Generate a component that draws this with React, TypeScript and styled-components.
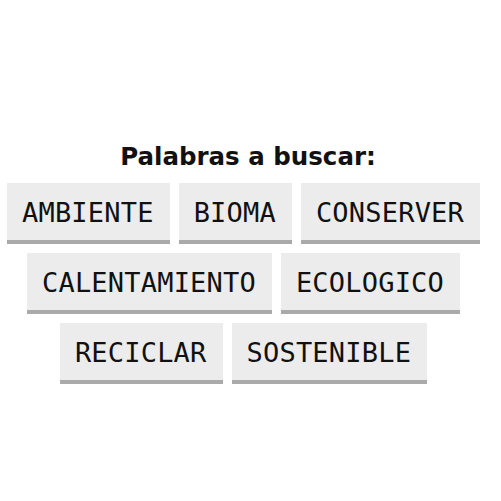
import React from "react";
import styled, { createGlobalStyle } from "styled-components";

const Global = createGlobalStyle`
  html, body { margin: 0; padding: 0; background: #fff; }
`;

const Page = styled.div`
  width: 488px;
  margin-left: 4px;
  padding-top: 142px;
  display: flex;
  flex-direction: column;
  align-items: center;
`;

const Title = styled.div`
  font-family: "DejaVu Sans", Verdana, sans-serif;
  font-weight: bold;
  font-size: 24.5px;
  line-height: 30px;
  color: #111;
  margin-bottom: 11px;
`;

const WordList = styled.div`
  display: flex;
  flex-wrap: wrap;
  justify-content: center;
  width: 100%;
`;

const Word = styled.div`
  font-family: "DejaVu Sans Mono", monospace;
  font-size: 27px;
  letter-spacing: 0.2px;
  line-height: 31px;
  color: #111;
  background: #ececec;
  padding: 14px 16px 12px 15px;
  border-bottom: 4px solid #aaaaaa;
  margin: 0 9px 9px 0;
`;

const words = [
  "AMBIENTE",
  "BIOMA",
  "CONSERVER",
  "CALENTAMIENTO",
  "ECOLOGICO",
  "RECICLAR",
  "SOSTENIBLE",
];

export default function App() {
  return (
    <>
      <Global />
      <Page>
        <Title>Palabras a buscar:</Title>
        <WordList>
          {words.map((w) => (
            <Word key={w}>{w}</Word>
          ))}
        </WordList>
      </Page>
    </>
  );
}
